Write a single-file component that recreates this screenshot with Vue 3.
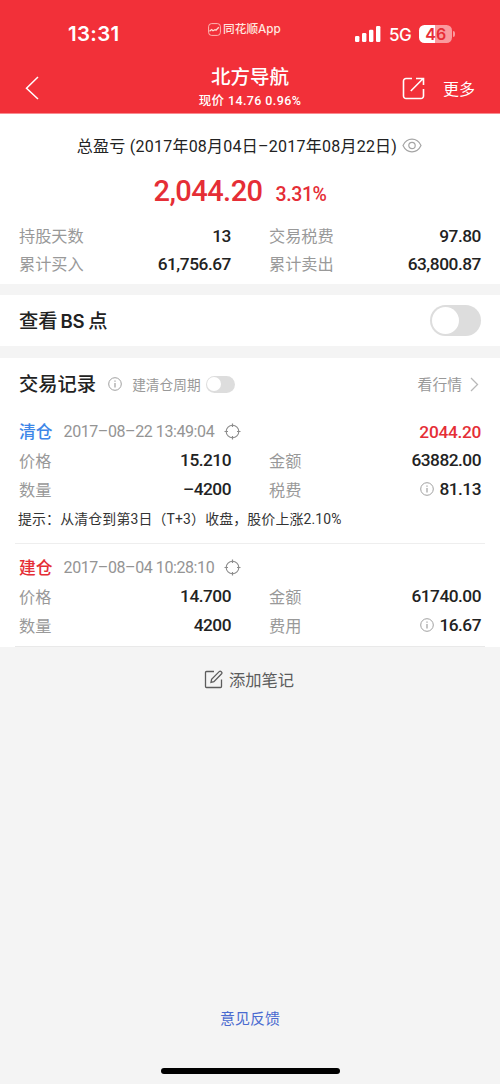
<script setup>
const summary = [
  [{ label: '持股天数', value: '13' }, { label: '交易税费', value: '97.80' }],
  [{ label: '累计买入', value: '61,756.67' }, { label: '累计卖出', value: '63,800.87' }],
]
const records = [
  {
    kind: 'sell', name: '清仓', time: '2017–08–22 13:49:04', profit: '2044.20',
    cells: [
      { label: '价格', value: '15.210' }, { label: '金额', value: '63882.00' },
      { label: '数量', value: '–4200' }, { label: '税费', value: '81.13', info: true },
    ],
    hint: '提示：从清仓到第3日（T+3）收盘，股价上涨2.10%',
  },
  {
    kind: 'buy', name: '建仓', time: '2017–08–04 10:28:10',
    cells: [
      { label: '价格', value: '14.700' }, { label: '金额', value: '61740.00' },
      { label: '数量', value: '4200' }, { label: '费用', value: '16.67', info: true },
    ],
  },
]
</script>

<template>
  <div class="screen">
    <header class="top">
      <div class="status">
        <span class="clock">13:31</span>
        <span class="app">
          <svg width="13" height="13" viewBox="0 0 13 13" fill="none" stroke="#ffd9cf">
            <rect x=".6" y=".6" width="11.8" height="11.8" rx="3" stroke-width=".8" />
            <path d="M1.5 8.3 3.6 6.5 5 7.8 7 6.7 8 7.2 10.8 4.2" stroke-width="1.3" />
          </svg>
          <span>同花顺App</span>
        </span>
        <span class="signals">
          <svg width="26" height="16" viewBox="0 0 26 16" fill="#fff">
            <rect x="0" y="10" width="4.4" height="6" rx="1.2" />
            <rect x="7" y="7" width="4.4" height="9" rx="1.2" />
            <rect x="14" y="3.7" width="4.4" height="12.3" rx="1.2" />
            <rect x="21" y="0" width="4.4" height="16" rx="1.2" />
          </svg>
          <span class="net">5G</span>
          <span class="battery">46</span><i class="nub"></i>
        </span>
      </div>
      <div class="nav">
        <svg class="back" width="14" height="24" viewBox="0 0 14 24" fill="none" stroke="#fff" stroke-width="1.5">
          <path d="M13 1 1.5 12.2 13 23" />
        </svg>
        <div class="stock">
          <div class="stock-name">北方导航</div>
          <div class="stock-price">现价 14.76 0.96%</div>
        </div>
        <div class="actions">
          <svg width="23" height="23" viewBox="0 0 23 23" fill="none" stroke="#fff" stroke-width="1.6">
            <path d="M10 1.5H4A2.5 2.5 0 0 0 1.5 4v15A2.5 2.5 0 0 0 4 21.5h15a2.5 2.5 0 0 0 2.5-2.5v-7M8.800 14 21.200 1.500M14 1.500h7.500V8" />
          </svg>
          <span>更多</span>
        </div>
      </div>
    </header>

    <section class="summary">
      <div class="period">
        <span>总盈亏 (2017年08月04日–2017年08月22日)</span>
        <svg width="20" height="15" viewBox="0 0 20 15" fill="none" stroke="#a5a5a5" stroke-width="1.2">
          <path d="M1 7.5C3 3.3 6.2 1.2 10 1.2s7 2.1 9 6.3c-2 4.200-5.200 6.300-9 6.300S3 11.700 1 7.500Z" />
          <circle cx="10" cy="7.500" r="3.200" />
        </svg>
      </div>
      <div class="total"><b>2,044.20</b><span>3.31%</span></div>
      <div v-for="(row, i) in summary" :key="i" class="pair stat">
        <div v-for="c in row" :key="c.label" class="cell">
          <span class="label">{{ c.label }}</span><span class="value">{{ c.value }}</span>
        </div>
      </div>
    </section>

    <section class="bs">
      <h2>查看<span class="latin">BS</span>点</h2>
      <i class="switch"></i>
    </section>

    <section class="records">
      <div class="head">
        <h2>交易记录</h2>
        <svg class="info" width="14" height="14" viewBox="0 0 14 14" fill="none" stroke="#a0a0a0">
          <circle cx="7" cy="7" r="6.300" /><path d="M7 6v4.500M7 3.400v1.300" stroke-width="1.200" />
        </svg>
        <span class="cycle">建清仓周期</span>
        <i class="switch small"></i>
        <span class="quote">看行情</span>
        <svg width="9" height="15" viewBox="0 0 9 15" fill="none" stroke="#b8b8b8" stroke-width="1.300">
          <path d="M1 1 7.500 7.500 1 14" />
        </svg>
      </div>
      <article v-for="r in records" :key="r.kind" :class="r.kind">
        <div class="trade">
          <span class="kind">{{ r.name }}</span>
          <span class="time">{{ r.time }}</span>
          <svg width="17" height="17" viewBox="0 0 17 17" fill="none" stroke="#8c8c8c">
            <circle cx="8.500" cy="8.500" r="6.300" stroke-width="1.100" />
            <path d="M8.500 .5v3.500M8.500 13v3.500M.5 8.500h3.500M13 8.500h3.500" stroke-width="1.200" />
          </svg>
          <span class="profit">{{ r.profit }}</span>
        </div>
        <div class="pair detail">
          <div v-for="c in r.cells" :key="c.label" class="cell">
            <span class="label">{{ c.label }}</span>
            <span class="value">
              <svg v-if="c.info" width="14" height="14" viewBox="0 0 14 14" fill="none" stroke="#a0a0a0">
                <circle cx="7" cy="7" r="6.300" /><path d="M7 6v4.500M7 3.400v1.300" stroke-width="1.200" />
              </svg>{{ c.value }}
            </span>
          </div>
        </div>
        <p v-if="r.hint">{{ r.hint }}</p>
      </article>
    </section>

    <div class="note">
      <svg width="19" height="19" viewBox="0 0 19 19" fill="none" stroke="#5c5c5c" stroke-width="1.300">
        <path d="M10 1.500H2.500a1 1 0 0 0-1 1v14a1 1 0 0 0 1 1h14a1 1 0 0 0 1-1V9.500M7 12.400l.6-3.200 7.800-7.800q.8-.6 1.600.1l.6.600q.7.800 0 1.600L9.900 11.600Z" />
      </svg>
      <span>添加笔记</span>
    </div>
    <footer>
      <span>意见反馈</span>
      <i class="home"></i>
    </footer>
  </div>
</template>

<style>
body { margin: 0; background: #f4f4f4; }
</style>

<style scoped>
.screen {
  width: 500px; height: 1084px; overflow: hidden; display: flex; flex-direction: column;
  background: #f4f4f4; color: #222; white-space: nowrap;
  font-family: Roboto, "Noto Sans CJK SC", sans-serif;
}
svg { display: block; flex: none; }
h2, p { margin: 0; }
.top { height: 114px; margin-bottom: -1px; flex: none; background: #f23039; color: #fff; border-bottom: 1px solid #f98b90; box-sizing: border-box; position: relative; }
.status { height: 60px; display: grid; grid-template-columns: 208px 1fr 146px; }
.clock { padding: 21px 0 0 68px; font: 600 20.500px/26px Inter, sans-serif; letter-spacing: .3px; }
.app { display: flex; gap: 2px; padding-top: 23px; height: 13px; align-items: center; font: 500 11.700px/13px Inter, "Noto Sans CJK SC", sans-serif; color: #ffe5df; }
.signals { display: flex; height: 18px; padding-top: 25px; align-items: center; }
.signals svg { margin-left: 1px; }
.net { font: 500 17px/18px Inter, sans-serif; margin: 1px 8px 0; letter-spacing: -.5px; }
.battery {
  width: 33px; height: 18px; border-radius: 5.500px; text-align: center;
  background: linear-gradient(90deg, #fff 47%, #fa9a9e 47%); color: #e82d36;
  font: 600 16px/18px Inter, sans-serif;
}
.nub { width: 2px; height: 6px; margin-left: 1px; border-radius: 0 2px 2px 0; background: #fa9a9e; }
.nav { height: 52px; display: grid; grid-template-columns: 1fr 160px 1fr; }
.back { margin: 16px 0 0 25px; }
.stock { text-align: center; }
.stock-name { font-size: 19.500px; font-weight: 500; line-height: 26px; margin-top: 5px; }
.stock-price { font-size: 12.500px; font-weight: 500; line-height: 18px; margin-top: 1px; letter-spacing: .4px; }
.actions { display: flex; justify-content: flex-end; align-items: center; gap: 18px; height: 24px; padding: 16px 25px 0 0; font-size: 16px; }
.summary { height: 171px; flex: none; background: #fff; padding: 0 19px; box-sizing: border-box; }
.period { display: flex; justify-content: center; align-items: center; gap: 5px; height: 24px; padding: 20px 1px 0 0; font-size: 16px; letter-spacing: .24px; }
.total { display: flex; justify-content: center; align-items: baseline; gap: 13px; color: #e52e36; height: 42px; line-height: 42px; margin: 13px 0 9px; padding-right: 20px; }
.total b { font-size: 29px; font-weight: 500; letter-spacing: -.55px; }
.total span { font-size: 19.500px; font-weight: 500; letter-spacing: -.4px; }
.pair { display: grid; grid-template-columns: 212px 212px; column-gap: 38px; }
.cell { display: flex; justify-content: space-between; align-items: center; }
.stat .cell { height: 28px; }
.label { font-size: 16.200px; color: #999; }
.value { display: flex; align-items: center; gap: 5px; font-size: 17.300px; font-weight: 500; color: #222; padding-top: 1px; letter-spacing: -.5px; }
.stat .value { letter-spacing: -.45px; }
.bs { height: 51px; margin: 11px 0 12px; padding: 0 19px; flex: none; display: flex; align-items: center; justify-content: space-between; background: #fff; }
h2 { font-size: 19.300px; font-weight: 500; line-height: 28px; padding-top: 2px; }
.latin { font: 600 18.600px/1 Inter, sans-serif; margin: 0 4px 0 3px; letter-spacing: -.4px; }
.switch { width: 51px; height: 31px; border-radius: 16px; background: #ddd; display: flex; align-items: center; }
.switch::before { content: ""; width: 27px; height: 27px; margin-left: 2px; border-radius: 50%; background: #fff; }
.small { width: 29px; height: 17px; }
.small::before { width: 14px; height: 14px; margin-left: 1px; }
.records { background: #fff; height: 289px; flex: none; }
.head { display: flex; align-items: center; height: 52px; padding: 0 21px 0 19px; }
.info { margin: 0 11px 0 12px; }
.cycle { font-size: 13.700px; color: #999; margin: -1px 5px 0 -1px; }
.quote { font-size: 14.800px; color: #999; margin: -2px 8px 0 auto; }
article { padding: 0 4px; margin: 0 15px; }
.trade { display: flex; align-items: center; height: 28px; padding-top: 7px; }
.kind { font-size: 16.800px; font-weight: 500; margin-right: 11px; }
.sell .kind { color: #3d86e8; }
.buy .kind { color: #e52e36; }
.time { font-size: 16px; color: #949494; margin-right: 10px; letter-spacing: -.42px; }
.profit { margin-left: auto; color: #e52e36; font-size: 17.300px; font-weight: 500; letter-spacing: -.3px; padding-top: 1px; }
.detail .cell { height: 29px; }
p { font-size: 13.900px; line-height: 30px; margin-left: -1px; padding: 1px 0 9px; color: #333; letter-spacing: .17px; }
.sell { border-bottom: 1px solid #eee; }
.buy { border-bottom: 1px solid #e9e9e9; height: 102px; }
.buy .trade { padding-top: 9px; }
.note { display: flex; justify-content: center; align-items: center; gap: 6px; height: 30px; margin: 17px 2px 0 0; font-size: 16.300px; color: #5c5c5c; }
footer { margin-top: auto; display: flex; flex-direction: column; align-items: center; color: #4a6bd0; font-size: 15px; line-height: 22px; }
.home { width: 179px; height: 6px; margin: 38px 0 10px; border-radius: 3px; background: #000; }
</style>
